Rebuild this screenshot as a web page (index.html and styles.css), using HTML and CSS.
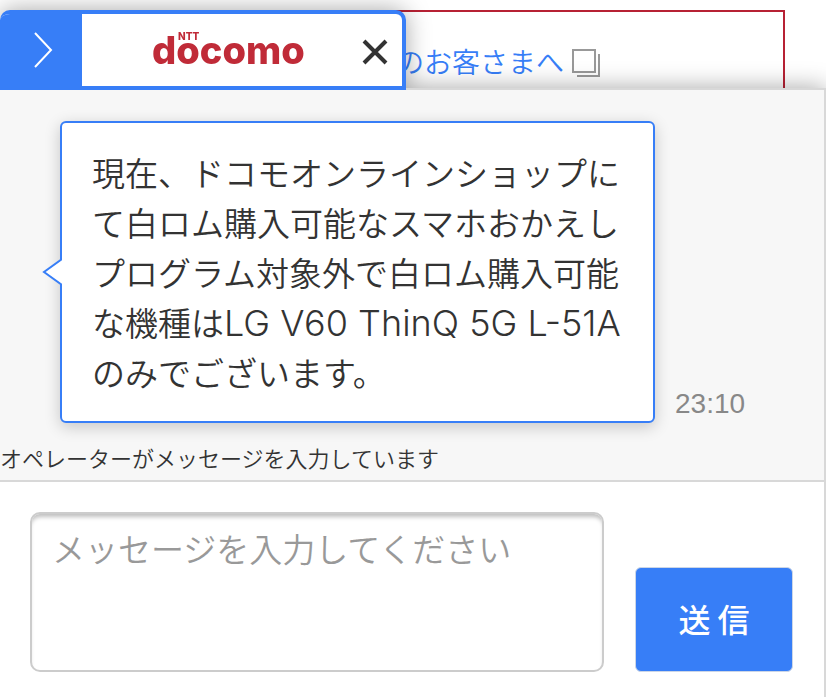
FILE: index.html
```html
<!DOCTYPE html>
<html lang="ja">
<head>
    <meta charset="UTF-8">
    <meta name="viewport" content="width=device-width, initial-scale=1.0">
    <title>チャット</title>
    <link rel="stylesheet" href="styles.css">
</head>
<body>
    <div class="screen">
        <div class="page">
            <a href="#" class="page-link">のお客さまへ
                <svg class="window-icon" viewBox="0 0 28 28" width="28" height="28" aria-hidden="true">
                    <path d="M1 1h22v22H1z"/>
                    <path d="M27 5v22H5"/>
                </svg>
            </a>
        </div>

        <div class="chat">
            <header class="chat-header">
                <button type="button" class="fold-button" aria-label="たたむ">
                    <svg viewBox="0 0 20 36" width="20" height="36" aria-hidden="true"><path d="M2 1l16 17L2 35"/></svg>
                </button>
                <div class="logo">
                    <span class="logo-ntt">NTT</span>
                    <span class="logo-name">docomo</span>
                </div>
                <button type="button" class="close-button" aria-label="閉じる">
                    <svg viewBox="0 0 26 26" width="26" height="26" aria-hidden="true"><path d="M2 2l22 22M24 2L2 24"/></svg>
                </button>
            </header>

            <main class="chat-body">
                <div class="log">
                    <div class="message">
                        <div class="bubble">
                            <svg class="bubble-tail" viewBox="0 0 20 28" width="20" height="28" aria-hidden="true"><path d="M20 1L2 14l18 13"/></svg>
                            現在、ドコモオンラインショップにて白ロム購入可能なスマホおかえしプログラム対象外で白ロム購入可能な機種は<span class="model">LG V60 ThinQ 5G L-51A</span>のみでございます。
                        </div>
                        <time class="time">23:10</time>
                    </div>
                    <p class="status">オペレーターがメッセージを入力しています</p>
                </div>

                <form class="send-form">
                    <textarea class="send-text" placeholder="メッセージを入力してください" aria-label="メッセージ"></textarea>
                    <button type="button" class="send-button">送 信</button>
                </form>
            </main>
        </div>
    </div>
</body>
</html>
```
FILE: styles.css
```css
* {
    box-sizing: border-box;
}

body {
    margin: 0;
    background-color: #fff;
    color: #333;
    font-family: "Noto Sans CJK JP", sans-serif;
    font-weight: 350;
}

button {
    padding: 0;
    border: none;
    cursor: pointer;
}

svg {
    fill: none;
    stroke-width: 2px;
}

/* the page and the chat window share one cell, chat on top */
.screen {
    display: grid;
    min-height: 100vh;
    overflow: hidden;
}

.page,
.chat {
    grid-area: 1 / 1;
}

.page {
    margin: 10px 41px 0 390px;
    padding: 27px 0 0 6px;
    border-top: 2px solid #b72134;
    border-right: 2px solid #b72134;
}

.page-link {
    display: flex;
    align-items: center;
    gap: 8px;
    color: #377ef7;
    font-size: 28px;
    line-height: 44px;
    text-decoration: none;
    white-space: nowrap;
}

.window-icon {
    margin-top: 4px;
    stroke: #999;
}

.chat {
    display: flex;
    flex-direction: column;
    padding-top: 10px;
    filter: drop-shadow(0 0 12px rgba(0, 0, 0, 0.35));
}

.chat-header {
    display: flex;
    align-items: center;
    position: relative;
    z-index: 1;
    width: 406px;
    max-width: 100%;
    height: 80px;
    margin-bottom: -2px;
    border: 4px solid #377ef7;
    border-left: none;
    border-radius: 10px 10px 0 0;
    background-color: #fff;
    overflow: hidden;
}

.fold-button {
    display: flex;
    align-items: center;
    justify-content: center;
    align-self: stretch;
    width: 82px;
    padding-left: 4px;
    background-color: #377ef7;
}

.fold-button svg {
    stroke: #fff;
}

.logo {
    display: flex;
    flex: 1;
    flex-direction: column;
    padding: 0 0 8px 70px;
    color: #c02b38;
    font-family: Inter, sans-serif;
    font-weight: 800;
}

.logo-ntt {
    padding-left: 26px;
    font-size: 10px;
    line-height: 8px;
}

.logo-name {
    font-size: 38px;
    line-height: 20px;
}

.close-button {
    display: flex;
    margin: 4px 14px 0 0;
    background: none;
}

.close-button svg {
    stroke: #333;
    stroke-width: 4px;
}

.chat-body {
    display: flex;
    flex: 1;
    flex-direction: column;
    border-top: 2px solid #d8d8d8;
    border-right: 2px solid #d8d8d8;
    background-color: #fff;
}

.log {
    padding-top: 31px;
    border-bottom: 2px solid #d8d8d8;
    background-color: #f7f7f7;
}

.message {
    display: flex;
    align-items: flex-end;
    gap: 20px;
    padding: 0 60px;
}

.bubble {
    position: relative;
    flex: 0 1 595px;
    padding: 24px 30px;
    border: 2px solid #377ef7;
    border-radius: 6px;
    background-color: #fff;
    box-shadow: 0 4px 16px rgba(0, 0, 0, 0.2);
    font-size: 33px;
    line-height: 50px;
}

.bubble-tail {
    position: absolute;
    top: 135px;
    left: -20px;
    fill: #fff;
    stroke: #377ef7;
}

.model {
    font-family: Inter, sans-serif;
    font-size: 36px;
    font-weight: 300;
    line-height: 36px;
    white-space: nowrap;
}

.time {
    color: #888;
    font-family: "Liberation Sans", sans-serif;
    font-size: 28px;
    line-height: 38px;
}

.status {
    margin: 18px 0 0;
    padding-bottom: 7px;
    font-size: 22px;
    line-height: 32px;
}

.send-form {
    display: flex;
    align-items: flex-end;
    gap: 31px;
    padding: 30px 31px 25px 30px;
}

.send-text {
    flex: 1;
    min-width: 0;
    height: 160px;
    padding: 10px 20px;
    border: 2px solid #ccc;
    border-radius: 10px;
    background-color: #fff;
    box-shadow: inset 0 5px 4px -2px rgba(0, 0, 0, 0.25);
    color: #333;
    font: inherit;
    font-size: 33px;
    line-height: 48px;
    resize: none;
}

.send-text::placeholder {
    color: #999;
}

.send-button {
    width: 158px;
    height: 105px;
    padding-bottom: 4px;
    border: 1px solid #ccd6e6;
    border-radius: 6px;
    background-color: #377ef7;
    color: #fff;
    font-family: inherit;
    font-size: 32px;
    font-weight: 500;
}
```
